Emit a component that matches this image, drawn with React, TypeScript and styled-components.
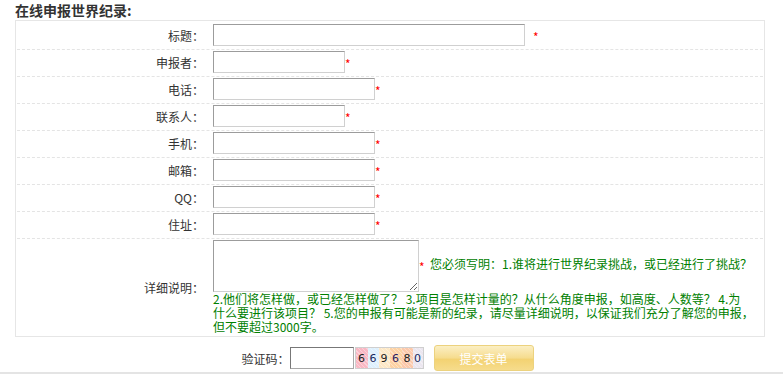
import styled, { createGlobalStyle } from 'styled-components'

const GlobalStyle = createGlobalStyle`
body {
  margin: 0;
  background: #fff;
  font-family: "Noto Sans CJK SC", sans-serif;
  font-size: 12px;
  color: #333;
}
`
const Page = styled.div`
width: 783px;
`
const Heading = styled.h3`
margin: 0;
padding-left: 15px;
height: 20px;
line-height: 20px;
font-size: 14px;
font-weight: bold;
color: #333;
`
const Box = styled.div`
margin-left: 15px;
width: 750px;
box-sizing: border-box;
border: 1px solid #e6e6e6;
padding-top: 2px;
`
const Row = styled.div<{ $last?: boolean }>`
display: flex;
margin: 0 1px;
border-bottom: ${p => (p.$last ? 'none' : '1px dashed #e4e4e4')};
`
const Label = styled.div`
width: 187px;
flex: none;
text-align: right;
align-self: center;
line-height: 16px;
color: #333;
`
const Field = styled.div<{ $gap?: number }>`
flex: 1;
display: flex;
align-items: center;
gap: ${p => p.$gap || 0}px;
padding: 1px 0 3px 9px;
`
const TextField = styled.div`
flex: 1;
padding: 1px 2px 2px 9px;
line-height: 14px;
color: #008000;
`
const Input = styled.input<{ $w: number }>`
width: ${p => p.$w}px;
height: 22px;
box-sizing: border-box;
margin: 0;
padding: 0 3px;
border: 1px solid;
border-color: #9c9c9c #d0d0d0 #d0d0d0 #9c9c9c;
background: #fff;
font: inherit;
`
const Area = styled.textarea`
width: 206px;
height: 52px;
box-sizing: border-box;
margin: 0;
padding: 2px;
border: 1px solid;
border-color: #9c9c9c #d0d0d0 #d0d0d0 #9c9c9c;
vertical-align: middle;
font: inherit;
`
const Star = styled.span`
color: #f00;
font-size: 12px;
line-height: 12px;
vertical-align: -3px;
`
const FieldStar = styled(Star)`
margin-top: 3px;
`
const CaptchaRow = styled.div`
width: 775px;
display: flex;
justify-content: center;
align-items: center;
padding: 8px 0 1px;
`
const CodeInput = styled.input`
width: 64px;
height: 22px;
box-sizing: border-box;
margin: 0;
border: 1px solid;
border-color: #777 #a8a8a8 #a8a8a8 #777;
font: inherit;
`
const Captcha = styled.span`
display: flex;
height: 22px;
margin-left: 1px;
box-sizing: border-box;
border: 1px solid #cfcfcf;
`
const Digit = styled.span<{ $bg: string; $c: string; $w: number }>`
width: ${p => p.$w}px;
display: flex;
align-items: center;
justify-content: center;
background:
  repeating-linear-gradient(45deg, rgba(255,255,255,0.35) 0 1px, transparent 1px 3px),
  ${p => p.$bg};
color: ${p => p.$c};
font-family: "DejaVu Sans", sans-serif;
font-size: 11px;
`
const Submit = styled.button`
margin-left: 10px;
width: 100px;
height: 26px;
border: 1px solid #ecd27e;
border-radius: 3px;
background: linear-gradient(#fbefc4, #f6dc8e 50%, #f3d272 55%, #f6dc8c);
color: #fff;
font-family: inherit;
font-size: 12px;
padding: 0;
`
const Rule = styled.div`
height: 0;
border-bottom: 2px solid #e4e4e4;
`

const fields: { label: string; w: number; gap?: number }[] = [
  { label: '标题：', w: 312, gap: 8 },
  { label: '申报者：', w: 132 },
  { label: '电话：', w: 162 },
  { label: '联系人：', w: 132 },
  { label: '手机：', w: 162 },
  { label: '邮箱：', w: 162 },
  { label: 'QQ：', w: 162 },
  { label: '住址：', w: 162 },
]

const digits = [
  { d: '6', bg: '#f9b8c4', c: '#222', w: 12 },
  { d: '6', bg: '#def0fd', c: '#1a2a60', w: 11 },
  { d: '9', bg: '#fde8c6', c: '#222', w: 11 },
  { d: '6', bg: '#fdd2a4', c: '#2a2060', w: 12 },
  { d: '8', bg: '#fcc9ab', c: '#222', w: 11 },
  { d: '0', bg: '#ebe6ef', c: '#1a2a60', w: 10 },
]

const App = () => {
  return (
    <Page>
      <GlobalStyle />
      <Heading>在线申报世界纪录:</Heading>
      <Box>
        {fields.map(f => (
          <Row key={f.label}>
            <Label>{f.label}</Label>
            <Field $gap={f.gap}>
              <Input type="text" $w={f.w} />
              <FieldStar>*</FieldStar>
            </Field>
          </Row>
        ))}
        <Row $last>
          <Label>详细说明：</Label>
          <TextField>
            <Area />
            <Star>*</Star> &nbsp;您必须写明：1.谁将进行世界纪录挑战，或已经进行了挑战？
            <br />
            2.他们将怎样做，或已经怎样做了？ 3.项目是怎样计量的？从什么角度申报，如高度、人数等？ 4.为
            <br />
            什么要进行该项目？ 5.您的申报有可能是新的纪录，请尽量详细说明，以保证我们充分了解您的申报，
            <br />
            但不要超过3000字。
          </TextField>
        </Row>
      </Box>
      <CaptchaRow>
        <span>验证码：</span>
        <CodeInput type="text" />
        <Captcha>
          {digits.map((x, i) => (
            <Digit key={i} $bg={x.bg} $c={x.c} $w={x.w}>{x.d}</Digit>
          ))}
        </Captcha>
        <Submit>提交表单</Submit>
      </CaptchaRow>
      <Rule />
    </Page>
  )
}

export default App
